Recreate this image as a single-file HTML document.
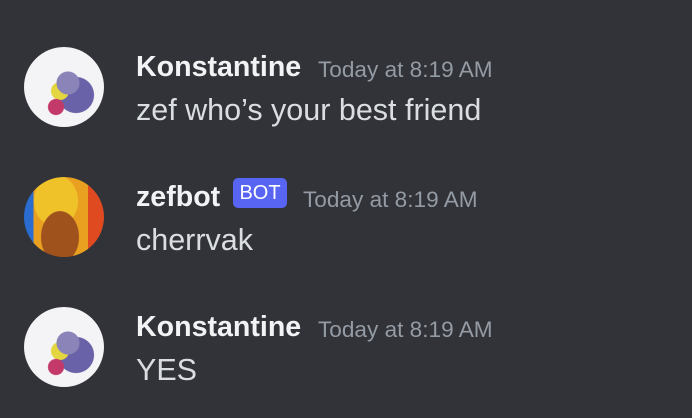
<!DOCTYPE html>
<html><head><style>
body{margin:0;width:692px;height:418px;background:#313338;font-family:"Liberation Sans",sans-serif;overflow:hidden;position:relative}
.av{position:absolute;left:24px;width:80px;height:80px;border-radius:50%;overflow:hidden}
.k{background:radial-gradient(circle at 55% 45%,#8a84b8 0 18%,transparent 19%),radial-gradient(circle at 40% 75%,#c33a6a 0 10%,transparent 11%),radial-gradient(circle at 45% 55%,#e4d640 0 14%,transparent 15%),radial-gradient(circle at 65% 60%,#6a62a8 0 25%,transparent 26%),#f4f4f6}
.z{background:radial-gradient(ellipse at 45% 75%,#a0521c 0 30%,transparent 31%),radial-gradient(ellipse at 40% 30%,#f0c22a 0 32%,transparent 33%),linear-gradient(90deg,#2a6cd0 0 12%,#e9a020 12% 80%,#e04a20 80%)}
.n{position:absolute;left:136px;font-size:28.6px;line-height:1;font-weight:bold;color:#f2f3f5}
.t{position:absolute;font-size:22.6px;line-height:1;color:#949ba4}
.m{position:absolute;left:136px;font-size:30.5px;line-height:1;color:#dbdee1}
.bot{position:absolute;left:233px;top:178px;width:54px;height:30px;background:#5865f2;border-radius:5px;color:#fff;font-size:20px;line-height:30px;text-align:center}
</style></head><body>
<div class="av k" style="top:47px"></div>
<div class="n" style="top:53px">Konstantine</div>
<div class="t" style="left:318px;top:59px">Today at 8:19 AM</div>
<div class="m" style="top:95px">zef who’s your best friend</div>

<div class="av z" style="top:177px"></div>
<div class="n" style="top:183px">zefbot</div>
<div class="bot">BOT</div>
<div class="t" style="left:303px;top:189px">Today at 8:19 AM</div>
<div class="m" style="top:225px">cherrvak</div>

<div class="av k" style="top:307px"></div>
<div class="n" style="top:313px">Konstantine</div>
<div class="t" style="left:318px;top:319px">Today at 8:19 AM</div>
<div class="m" style="top:355px">YES</div>
</body></html>
